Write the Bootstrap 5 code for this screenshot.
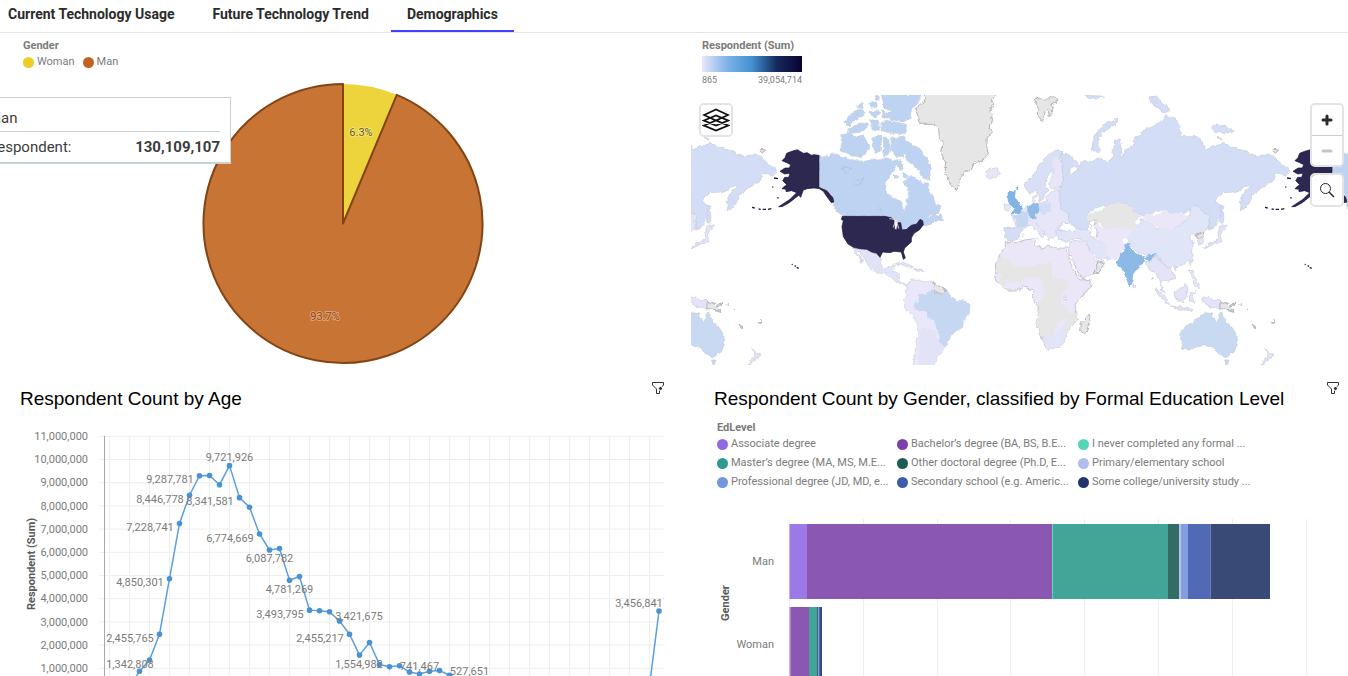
<!DOCTYPE html>
<html lang="en">
<head>
<meta charset="utf-8">
<meta name="viewport" content="width=device-width, initial-scale=1">
<title>Demographics</title>
<link href="https://cdn.jsdelivr.net/npm/bootstrap@5.3.0/dist/css/bootstrap.min.css" rel="stylesheet">
<style>
  body { font-family: Roboto, "Open Sans", sans-serif; color: #2b2b2b; background: #fff; }
  .tabs { height: 33px; border-bottom: 1px solid #e5e5e5; gap: 6px; }
  .tabs .nav-link { height: 32px; padding: 4px 16px 0; font-size: 14px; line-height: 20px; font-weight: 700; color: #2b2b2b; }
  .tabs .nav-item:first-child .nav-link { padding-left: 8px; }
  .tabs .nav-link.active { border-bottom: 2px solid #4040ff; }
  .board { display: grid; grid-template-columns: 691fr 657fr; }
  .board svg { display: block; }
  .chart { width: 100%; height: auto; }
  .legend { font-size: 11px; line-height: 16px; color: #7b7b7b; }
  .legend-name { font-weight: 700; color: #7b7b7b; }
  .dot { width: 11px; height: 11px; border-radius: 50%; flex: none; margin-right: 3px; }
  .gender-legend { padding: 5px 23px 0; height: 41px; }
  .map-legend { padding: 5px 11px 0; height: 62px; }
  .ramp { width: 100px; height: 16px; margin-top: 2px; background: linear-gradient(90deg, #e9e6fb 0%, #7fb2e6 25%, #4390d0 50%, #14295a 75%, #0b0033 100%); }
  .ramp-ends { width: 100px; font-size: 9px; line-height: 16px; }
  .ctl { width: 34px; background: #fff; border: 2px solid #e3e3e3; border-radius: 5px; background-clip: padding-box; overflow: hidden; }
  .ctl button { display: flex; align-items: center; justify-content: center; width: 100%; height: 30px; border: 0; padding: 0; background: #fff; }
  .ctl button + button { border-top: 1px solid #ccc; }
  .layers { left: 8px; top: 8px; }
  .map-tools { right: 4px; top: 8px; gap: 6px; }
  .tip { left: -23px; top: 64px; width: 254px; height: 67px; padding: 9px 10px; background: #fff; border: 1px solid #c8d2d2; border-bottom-width: 2px; font-size: 15px; line-height: 22px; color: #3c3c3c; }
  .tip-head { border-bottom: 1px solid #c8d2d2; padding-bottom: 2px; margin-bottom: 4px; }
  .panel-head { padding: 14px 23px 0 20px; height: 54px; }
  .panel-head h2 { font: 400 19px/24px "Liberation Sans", sans-serif; color: #000; margin: 7px 0 0; }
  .panel-wide { padding-right: 5px; padding-left: 23px; }
  .icon-btn { border: 0; background: none; padding: 0; height: 16px; }
  .ed-legend { padding: 0 26px; height: 94px; }
  .ed-items { display: grid; grid-template-columns: 180px 181px 1fr; row-gap: 3px; }
  .tx { font: 11px Roboto, sans-serif; fill: #7b7b7b; }
  .axis-name { font-weight: 700; fill: #5a5a5a; }
  .water { fill: #fff; }
  .edge { stroke: #c3cad8; stroke-width: 2; }
  .no-data { fill: #e6e6e6; stroke: #b4b4b4; stroke-width: 3; }
</style>
</head>
<body class="vh-100 overflow-hidden">
<nav aria-label="Dashboard tabs">
  <ul class="nav tabs flex-nowrap">
    <li class="nav-item"><a class="nav-link" href="#current">Current Technology Usage</a></li>
    <li class="nav-item"><a class="nav-link" href="#future">Future Technology Trend</a></li>
    <li class="nav-item"><a class="nav-link active" aria-current="page" href="#demographics">Demographics</a></li>
  </ul>
</nav>
<main class="board" id="demographics">
  <section class="position-relative" aria-label="Gender">
    <div class="legend gender-legend">
      <div class="legend-name">Gender</div>
      <div class="d-flex align-items-center">
        <span class="dot" style="background:#eccd2a"></span><span class="me-2">Woman</span>
        <span class="dot" style="background:#c26320"></span><span>Man</span>
      </div>
    </div>
    <svg class="chart" viewBox="0 74 691 292">
      <path fill="#edd33c" d="M343 223.500V84A139.500 139.500 0 0 1 396.800 94.800Z"/>
      <path fill="#c87434" stroke="#834414" stroke-width="2" stroke-linejoin="round" d="M343 223.500L396.800 94.800A139.500 139.500 0 1 1 343 84Z"/>
      <g class="tx" text-anchor="middle">
        <text x="361" y="136" fill="#6b6020" stroke="#f3e27c" stroke-width="2" paint-order="stroke">6.3%</text>
        <text x="325" y="320" fill="#8a4a20" stroke="#e0a070" stroke-width="2" paint-order="stroke">93.7%</text>
      </g>
    </svg>
    <div class="tip position-absolute" role="status">
      <div class="tip-head">Man</div>
      <div class="d-flex justify-content-between"><span>Respondent:</span><b>130,109,107</b></div>
    </div>
  </section>

  <section aria-label="Respondents by country">
    <div class="legend map-legend">
      <div class="legend-name">Respondent (Sum)</div>
      <div class="ramp"></div>
      <div class="ramp-ends d-flex justify-content-between"><span>865</span><span>39,054,714</span></div>
    </div>
    <div class="position-relative">
      <svg class="chart" viewBox="691 95 657 270">
        <defs>
          <filter id="coast" x="-5%" y="-5%" width="110%" height="110%">
            <feTurbulence type="fractalNoise" baseFrequency=".18" numOctaves="3" seed="4"/>
            <feDisplacementMap in="SourceGraphic" scale="5" xChannelSelector="R" yChannelSelector="G"/>
          </filter>
          <g id="world">
            <g filter="url(#coast)">
            <!-- the Americas -->
            <g transform="translate(690 90) scale(.33333)">
              <g fill="#bed3f1" class="edge">
                <path d="M387 196L400 202 430 192 450 196 470 204 500 212 525 214 550 208 570 206 590 204 610 212 625 205 640 240 660 250 690 266 700 280 712 278 716 300 735 330 750 350 752 366 720 372 706 388 718 380 736 368 738 376 752 374 762 392 745 390 730 398 715 408 700 406 690 388 664 410 636 422 620 392 585 379 455 379 440 366 430 346 434 336 426 316 400 298 387 292Z"/>
                <path d="M604 144L640 140 655 156 690 176 712 208 725 240 716 250 720 268 700 262 684 240 668 226 650 208 632 200 618 196 600 180Z"/>
                <path d="M452 134L480 130 500 142 520 138 530 150 538 180 524 196 500 202 470 190 450 182 458 160Z"/>
                <path d="M545 142L575 138 574 184 560 188 548 170Z"/><path d="M580 140L597 150 598 190 582 200Z"/>
                <path d="M462 98L472 80 490 66 510 56 522 66 516 80 494 90 478 110Z"/>
                <path d="M474 124L490 108 528 96 534 110 512 126 480 130Z"/>
                <path d="M536 40L556 36 562 48 540 52Z"/><path d="M540 66L560 60 568 76 548 80Z"/><path d="M542 90L566 90 568 118 546 116Z"/>
                <path d="M574 12L694 12 684 40 664 60 660 84 640 96 610 90 584 80 600 62 578 44Z"/>
                <path d="M572 98L600 92 650 104 646 130 600 130 574 120Z"/>
                <path d="M556 16L566 18 568 30 560 30Z"/><path d="M574 60L586 62 588 84 576 82Z"/><path d="M500 46L520 40 520 52 502 54Z"/>
                <path d="M620 250L634 260 630 268 616 264Z"/>
              </g>
              <path class="water" d="M622 228L604 256 588 276 584 300 600 318 628 330 638 342 642 358 648 354 650 330 656 316 650 290 640 278 662 252 682 268 700 278 708 274 684 248 668 246 672 230 656 224 646 192 638 196 646 220 632 240Z"/>
              <path fill="#bed3f1" d="M612 252L628 254 626 264 612 262ZM640 246L656 258 648 266 638 260Z"/>
              <g fill="none" stroke="#a5bce0" stroke-width="2"><path d="M454 236L466 228 484 236 470 248ZM490 286L500 272 522 266 512 280ZM562 348L578 362"/></g>
              <g fill="#e3e3f7" class="edge">
                <path d="M488 474L508 476 530 478 545 486 560 490 570 504 572 524 582 536 600 528 608 524 614 530 604 544 620 546 628 560 630 574 648 584 652 590 636 586 614 570 590 552 560 548 540 538 524 510 506 484 502 490 520 516 514 516 500 496Z"/>
                <path d="M612 522L630 516 652 522 672 532 660 534 636 524Z"/><path d="M670 540L690 534 706 540 688 544Z"/>
                <path fill="#e9e7f9" d="M652 586L664 572 684 566 700 572 726 574 736 588 766 598 772 606 790 628 826 634 840 648 838 664 822 690 818 712 800 722 784 732 776 756 762 772 754 790 744 796 736 820 730 832 670 832 676 780 684 740 682 700 668 680 648 656 640 632 650 610Z"/>
              </g>
              <path fill="#e3e3f7" d="M690 720L704 712 738 724 742 750 760 770 744 796 730 832 686 832Z"/>
              <path fill="#c6d8f1" d="M686 612L706 612 714 602 730 598 736 610 768 608 772 604 790 628 826 634 840 648 838 664 822 690 818 712 784 732 776 756 762 772 745 755 752 738 736 716 732 690 712 680 704 664 684 662 670 652 676 638 690 634Z"/>
              <path class="no-data" stroke="none" d="M728 578L750 590 768 598 764 608 738 610Z"/>
            </g>
            <!-- Greenland, Europe and Africa -->
            <g transform="translate(890 90) scale(.33333)">
              <g class="no-data">
                <path d="M96 8L104 22 98 40 78 56 84 80 92 100 126 100 146 116 148 140 160 160 154 190 166 216 166 250 182 285 200 298 210 270 222 246 240 238 256 220 280 210 296 190 290 170 292 140 304 130 298 110 308 90 300 60 312 40 304 30 320 8Z"/>
                <path d="M432 30L450 24 462 32 476 26 490 16 504 26 500 40 484 44 490 70 478 80 474 56 466 62 458 95 446 80 444 52Z"/>
                <path d="M598 672L602 686 586 730 572 726 574 700Z"/>
              </g>
              <g fill="#e7e6f9" class="edge">
                <path d="M284 244L300 234 326 238 328 252 306 266 290 262Z"/>
                <path fill="#d9e0f6" d="M406 285L412 270 432 256 448 222 470 198 496 180 520 190 514 210 516 240 522 270 512 292 488 298 478 290 480 268 492 250 488 244 476 258 468 270 466 290 474 300 462 326 450 334 444 320 438 300 420 312 408 306Z"/>
                <path d="M424 320L438 318 436 336 426 338Z"/><path d="M342 346L358 338 362 356 346 362Z"/>
                <path d="M366 376L384 376 412 348 430 340 450 340 474 334 472 316 500 298 520 300 545 330 560 370 548 396 524 402 512 398 506 420 498 438 486 444 474 450 464 428 448 408 436 396 444 410 464 430 458 444 446 426 426 408 396 412 380 410Z"/>
              </g>
              <path fill="#e7e6f9" d="M486 212L508 196 516 240 520 275 505 292 484 296 478 284 480 268 492 248Z"/>
              <path fill="#c6d8f1" d="M364 376L384 376 400 362 412 370 416 390 412 408 396 412 380 410 378 392Z"/>
              <path fill="#d3ddf5" class="edge" d="M346 412L380 412 400 416 390 430 380 448 362 454 350 448 344 440Z"/>
              <path fill="#d3ddf5" d="M448 344L484 338 486 368 460 372 448 364Z"/>
              <path fill="#8fbbe6" d="M412 348L426 340 446 338 448 366 438 372 440 386 424 388 412 374Z"/>
              <path fill="#81b3e4" d="M354 306L378 304 374 320 386 336 398 352 392 368 364 374 374 358 360 344 352 326ZM376 292L386 290 384 300Z"/>
              <path fill="#e7e6f9" d="M396 430L404 430 402 442 396 440ZM430 444L446 442 444 452Z"/>
              <path fill="#e1e5f8" class="edge" d="M500 424L520 422 550 418 570 412 600 424 606 444 622 452 650 454 668 460 662 480 668 506 640 508 620 500 596 476 586 450 560 446 530 456 505 446Z"/>
              <path fill="#ebe7f9" class="edge" d="M536 458L586 450 598 480 618 508 640 514 642 526 628 544 572 566 560 540 540 500Z"/>
              <path class="no-data" d="M622 514L642 522 628 546 608 552 622 534Z"/>
              <path fill="#ebe7f9" stroke="#c3c3cc" stroke-width="3" d="M346 456L380 458 404 450 434 446 436 464 460 476 470 468 500 474 532 474 534 496 548 530 556 556 570 570 606 568 600 592 570 624 556 640 556 668 562 690 540 710 528 740 514 766 498 772 472 778 462 756 450 730 438 700 446 670 440 640 426 620 430 600 404 592 380 600 350 600 326 580 314 560 318 546 316 520 330 492 346 470Z"/>
              <path fill="#e6e6e6" d="M318 546L318 514 326 500 350 506 378 530 420 530 454 520 486 520 486 560 530 570 536 584 514 610 512 640 530 660 536 664 560 670 562 690 540 710 528 738 520 716 524 690 500 696 496 730 458 744 438 700 446 670 442 640 460 630 462 606 450 564 404 560 396 576 352 574 344 598 326 580 336 560Z"/>
              <path fill="#e0e5f8" d="M456 742L496 732 512 714 526 720 528 740 514 766 498 772 472 778Z"/>
              <path fill="#fff" stroke="#b9b9c2" stroke-width="2" d="M534 498L540 496 556 530 570 560 560 556 546 530ZM522 620L532 618 530 630 522 630Z"/>
            </g>
            <!-- Asia and Oceania -->
            <g transform="translate(1100 90) scale(.33333)">
              <g fill="#d3ddf6" class="edge">
                <path d="M-118 192L-100 190 -80 205 -66 220 -68 232 -92 232 -96 240 -84 254 -70 246 -66 232 -50 212 -30 216 -10 206 5 208 20 214 36 208 40 180 44 156 60 146 66 172 60 200 72 196 76 180 94 170 104 160 100 148 120 140 124 124 160 108 180 98 196 76 214 80 242 104 244 128 240 140 268 136 304 148 316 180 340 170 370 160 410 176 440 184 450 196 480 196 515 196 545 222 570 240 556 256 528 252 524 272 488 290 470 306 456 316 448 340 424 366 420 330 436 300 456 282 440 284 420 300 400 306 370 308 342 334 360 345 362 380 344 410 325 416 330 384 300 350 285 346 270 360 250 372 220 374 190 360 150 370 130 378 100 364 80 340 20 346 -36 366 -38 390 -30 402 -40 422 -75 410 -95 400 -90 375 -112 362 -125 330 -118 290 -110 270Z"/>
                <path d="M-20 186L-24 170 -14 130 10 104 50 88 52 98 20 120 -4 140 -6 165 2 184Z"/>
                <path d="M146 22L170 18 184 38 202 48 208 64 188 68 172 50 154 38Z"/>
                <path d="M334 114L350 102 374 110 402 122 396 128 350 128Z"/><path d="M356 138L370 150 354 148Z"/>
                <path d="M362 345L370 350 372 394 362 404Z"/>
                <path d="M-46 16L0 18 14 22 -30 26Z"/>
              </g>
              <path class="no-data" d="M520 178L536 180 530 186 520 184Z"/>
              <path fill="#e1e5f8" class="edge" d="M70 430L110 410 128 384 170 414 220 416 262 390 270 360 285 346 300 352 330 384 326 414 300 432 290 436 272 434 268 448 282 458 276 476 280 498 264 514 234 532 222 528 206 534 190 524 170 512 168 494 140 496 110 484 92 468Z"/>
              <path fill="#ebe7f9" d="M128 378L150 372 172 374 196 360 222 372 250 372 268 380 250 396 220 416 190 416 160 406 140 392Z"/>
              <path fill="#ebe7f9" d="M-16 402L20 416 60 412 110 414 70 444 74 470 62 492 46 512 30 508 18 490 20 462 -8 448Z"/>
              <path fill="#e6e6e6" d="M-38 370L10 360 22 344 56 336 84 346 98 364 126 380 108 396 112 414 80 416 60 412 20 420 0 402 -24 404 -38 384Z"/>
              <path fill="#fff" stroke="#b9b9c2" stroke-width="2" d="M-30 396L-14 390 -18 408 -8 422 -12 444 -28 438 -24 420Z"/>
              <path fill="#fff" class="edge" d="M-122 412L-112 398 -96 404 -72 412 -70 424 -96 424 -120 424Z"/>
              <path fill="#8cb9e5" d="M72 458L88 458 92 476 108 488 134 500 136 516 116 530 100 552 96 580 86 586 76 560 64 534 48 520 56 506 62 490 76 480ZM136 498L152 494 166 488 166 500 154 510 148 516 140 508ZM152 560L157 560 156 568Z"/>
              <path class="no-data" d="M286 434L312 424 308 440 296 446Z"/>
              <g fill="#e4e3f8" class="edge">
                <path d="M294 446L308 442 312 458 298 464Z"/><path d="M308 472L330 462 352 450 356 430 358 410 384 404 366 420 362 456 340 464 318 474Z"/>
                <path d="M136 514L150 516 154 510 168 496 190 522 206 534 218 548 224 562 206 580 200 570 190 566 184 580 196 612 186 600 176 570 168 548 150 540Z"/>
                <path d="M162 594L180 606 206 634 212 648 196 638 176 616Z"/><path d="M212 648L240 650 280 658 270 662 230 656Z"/>
                <path d="M222 606L240 598 258 580 264 596 262 620 250 636 228 628Z"/><path d="M268 610L290 606 276 618 284 640 268 632Z"/>
                <path d="M268 540L280 540 284 560 296 580 298 596 284 592 278 570Z"/><path d="M306 620L330 624 360 634 358 656 330 650 310 634Z"/>
                <path d="M98 578L108 588 100 594Z"/><path d="M268 512L278 508 274 524Z"/><path d="M222 534L232 530 228 542Z"/>
                <path d="M496 776L506 790 520 792 512 808 498 814 482 830 488 814 504 800Z"/>
              </g>
              <path class="no-data" d="M360 632L386 644 402 664 380 658 360 656ZM392 646L408 640 398 648ZM456 706L468 714 464 716ZM514 698L524 690 516 700ZM416 642L422 648M438 658L444 662"/>
              <path fill="#c8d9f2" class="edge" d="M240 722L262 708 278 700 290 684 304 680 314 668 338 672 336 684 352 698 358 666 368 668 376 694 396 712 412 738 412 764 396 792 376 800 350 788 338 776 314 764 290 768 268 780 248 778 246 752ZM374 810L390 810 386 826 378 826Z"/>
            </g>
            </g>
            <!-- United States -->
            <g transform="translate(690 90) scale(.33333)" fill="#2d284f" stroke="#1b1442" stroke-width="2">
              <path d="M387 196L372 194 364 196 352 188 340 190 322 179 305 184 290 190 285 203 276 212 290 218 302 224 298 234 285 234 270 244 284 252 300 250 296 262 284 262 278 272 290 284 280 292 276 296 288 298 288 305 305 302 320 308 300 328 266 350 276 350 298 338 326 316 332 322 340 300 352 296 372 294 388 296 400 304 412 322 424 338 432 336 428 322 410 302 396 296 387 292Z"/>
              <path d="M457 379L585 379 606 384 612 392 614 418 620 420 624 398 632 398 636 420 650 418 664 406 680 402 690 388 698 392 700 404 688 420 672 430 664 444 664 456 644 474 640 486 646 504 640 508 634 486 612 484 600 488 578 486 570 502 560 490 545 486 530 478 508 476 490 472 474 462 460 440 456 410 460 392 454 388Z"/>
              <path fill="none" stroke-width="4" d="M252 264L264 266M247 291L250 291M186 352L194 354M206 357L212 358M218 358L228 358M234 358L244 356M262 323L266 324M305 523L308 524M314 527L318 529M320 532L326 535"/>
              <path fill="none" stroke="#c9d2ea" stroke-width="3" d="M598 386L618 388M616 394L610 412M622 400L626 416"/>
            </g>
          </g>
        </defs>
        <use href="#world"/><use href="#world" x="-513"/><use href="#world" x="513"/>
      </svg>
      <div class="ctl layers position-absolute">
        <button type="button" aria-label="Layers"><svg width="28" height="26" viewBox="0 0 28 26" fill="#fff" stroke="#111" stroke-width="1.800"><path d="M2 18.500L14 13.500 26 18.500 14 23.500ZM2 13.500L14 8.500 26 13.500 14 18.500ZM2 8L14 2.500 26 8 14 13.500Z"/></svg></button>
      </div>
      <div class="map-tools position-absolute d-flex flex-column">
        <div class="ctl">
          <button type="button" aria-label="Zoom in"><svg width="14" height="14" stroke="#2b2b2b" stroke-width="3" stroke-linecap="round"><path d="M3 7H11M7 3V11"/></svg></button>
          <button type="button" aria-label="Zoom out"><svg width="14" height="14" stroke="#c4c4c4" stroke-width="3" stroke-linecap="round"><path d="M3 7H11"/></svg></button>
        </div>
        <div class="ctl"><button type="button" aria-label="Search the map"><svg width="16" height="16" fill="none" stroke="#2b2b2b"><circle cx="6.500" cy="6.500" r="5"/><path stroke-width="1.500" d="M10 10L15 15"/></svg></button></div>
      </div>
    </div>
  </section>

  <section aria-labelledby="age-title">
    <div class="panel-head d-flex justify-content-between align-items-start">
      <h2 id="age-title">Respondent Count by Age</h2>
      <button class="icon-btn" type="button" aria-label="Filter"><svg width="20" height="16" viewBox="0 0 20 16"><path fill="none" stroke="#333" d="M4.500 2.500H15.500V5L11.500 9V13.500H8.500V9L4.500 5Z"/><circle cx="12.500" cy="8.500" r="2" fill="#333" stroke="#fff"/></svg></button>
    </div>
    <svg class="chart" viewBox="0 420 691 258" id="age-chart"></svg>
  </section>

  <section aria-labelledby="edu-title">
    <div class="panel-head panel-wide d-flex justify-content-between align-items-start">
      <h2 id="edu-title">Respondent Count by Gender, classified by Formal Education Level</h2>
      <button class="icon-btn" type="button" aria-label="Filter"><svg width="20" height="16" viewBox="0 0 20 16"><path fill="none" stroke="#333" d="M4.500 2.500H15.500V5L11.500 9V13.500H8.500V9L4.500 5Z"/><circle cx="12.500" cy="8.500" r="2" fill="#333" stroke="#fff"/></svg></button>
    </div>
    <div class="legend ed-legend">
      <div class="legend-name">EdLevel</div>
      <div class="ed-items" id="ed-items"></div>
    </div>
    <svg class="chart" viewBox="691 514 657 164" id="edu-chart"></svg>
  </section>
</main>
<script src="https://cdn.jsdelivr.net/npm/bootstrap@5.3.0/dist/js/bootstrap.bundle.min.js"></script>
<script>
  // Respondents by age
  const top11 = 436, perMillion = 23.2;
  const yOf = m => top11 + (11 - m) * perMillion;
  const ages = [.2, .86, 1.343, 2.456, 4.85, 7.229, 8.447, 9.288, 9.3, 8.9, 9.722, 8.342, 7.93, 6.775, 6.088, 6.15, 4.781, 4.94, 3.494, 3.47, 3.422, 3.03, 2.455, 1.555, 2.1, 1.15, 1.05, 1.1, .83, .741, .86, .89, .69, .528];
  const pts = ages.map((m, i) => [129.5 + i * 10, yOf(m)]);
  let s = '<g stroke="#eeeeee">';
  for (let m = 1; m <= 11; m++) s += `<path d="M99 ${yOf(m) + .3}H664"/>`;
  for (let x = 109.5; x < 660; x += 20) s += `<path d="M${x} 436V678"/>`;
  s += '</g><path stroke="#a8a8a8" d="M104.500 436V678"/><g class="tx" text-anchor="end">';
  for (let m = 1; m <= 11; m++) s += `<text x="88" y="${yOf(m) + 4}">${m},000,000</text>`;
  s += '</g><text class="tx axis-name" text-anchor="middle" transform="translate(35 564) rotate(-90)">Respondent (Sum)</text>';
  s += `<g fill="none" stroke="#5b9fdb" stroke-width="1.500"><polyline points="${pts.map(p => p.join()).join(' ')}"/><path d="M650.500 678L659 ${yOf(3.457)}"/></g><g fill="#4b92d3">`;
  [...pts, [659, yOf(3.457)]].forEach(p => s += `<circle cx="${p[0]}" cy="${p[1]}" r="2.800"/>`);
  s += '</g><g class="tx">';
  [['9,721,926', 229.5, 461], ['9,287,781', 170, 483], ['8,446,778', 160, 503], ['8,341,581', 210, 505], ['7,228,741', 150, 531], ['6,774,669', 230, 542], ['6,087,782', 269.5, 562], ['4,850,301', 140, 586], ['4,781,269', 289.5, 593], ['3,493,795', 280, 618], ['3,421,675', 359, 620], ['2,455,765', 130, 642], ['2,455,217', 320, 642], ['1,342,808', 130, 668], ['1,554,982', 359, 668], ['741,467', 419.5, 670], ['527,651', 469.5, 675], ['3,456,841', 639, 607]]
    .forEach(t => s += `<text text-anchor="middle" x="${t[1]}" y="${t[2]}">${t[0]}</text>`);
  document.getElementById('age-chart').innerHTML = s + '</g>';

  // Education levels by gender
  const levels = [['Associate degree', '#9169e6'], ['Bachelor’s degree (BA, BS, B.E...', '#7d3fab'], ['I never completed any formal ...', '#52d6b5'],
    ['Master’s degree (MA, MS, M.E...', '#2c9a8c'], ['Other doctoral degree (Ph.D, E...', '#1d5c54'], ['Primary/elementary school', '#b0bdec'],
    ['Professional degree (JD, MD, e...', '#7595dd'], ['Secondary school (e.g. Americ...', '#3e5cab'], ['Some college/university study ...', '#22346a']];
  document.getElementById('ed-items').innerHTML = levels.map(l =>
    `<div class="d-flex align-items-center text-nowrap"><span class="dot" style="background:${l[1]}"></span>${l[0]}</div>`).join('');
  const fills = ['#9b7ae8', '#8a57b2', '#5fdcba', '#43a498', '#336c65', '#b6c3ec', '#829edf', '#506ab5', '#3a4a76'];
  const rows = [[524, 75, [789.5, 807, 1052, 1053, 1168, 1179, 1181, 1188, 1210.5, 1270]],
    [607, 75, [789.5, 790.5, 809, 809, 817, 818, 818, 819, 820, 822]]];
  let b = '<g stroke="#eeeeee">';
  for (let i = 0; i < 8; i++) b += `<path d="M${789.5 + Math.round(i * 73.8)} 519V678"/>`;
  b += '</g>';
  rows.forEach(r => fills.forEach((f, i) => b += `<rect x="${r[2][i]}" y="${r[0]}" width="${r[2][i + 1] - r[2][i]}" height="${r[1]}" fill="${f}"/>`));
  b += '<g class="tx" text-anchor="end"><text x="774" y="565">Man</text><text x="774" y="648">Woman</text></g><text class="tx axis-name" text-anchor="middle" transform="translate(729 603) rotate(-90)">Gender</text>';
  document.getElementById('edu-chart').innerHTML = b;
</script>
</body>
</html>
